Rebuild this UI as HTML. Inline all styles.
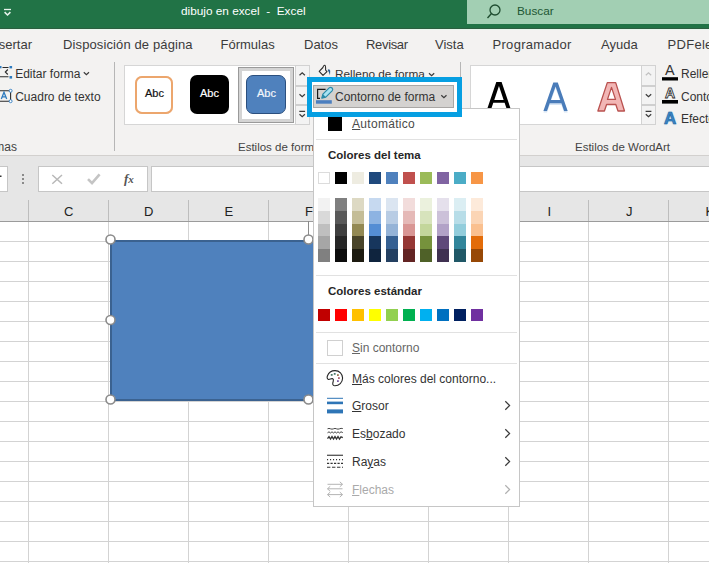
<!DOCTYPE html>
<html><head><meta charset="utf-8">
<style>
html,body{margin:0;padding:0}
body{width:709px;height:563px;overflow:hidden;position:relative;font-family:"Liberation Sans",sans-serif;background:#fff}
div,span{box-sizing:border-box}
.a{position:absolute}
.t{position:absolute;line-height:1;white-space:nowrap}
.m{letter-spacing:0.25px}
</style></head><body>

<!-- title bar -->
<div class="a" style="left:0;top:0;width:709px;height:28px;background:#217346"></div>
<div class="a" style="left:0;top:28px;width:709px;height:1px;background:#2c5e40"></div>
<div class="a" style="left:467px;top:0;width:242px;height:24px;background:#a2cfb3"></div>
<svg class="a" style="left:0;top:0" width="709" height="28">
  <path d="M4 9.5H11" stroke="#e8f3ec" stroke-width="1.3" fill="none"/>
  <path d="M4.6 12.2L7.5 15L10.4 12.2" stroke="#e8f3ec" stroke-width="1.6" fill="none"/>
  <circle cx="495" cy="10" r="5" stroke="#1f4d30" stroke-width="1.3" fill="none"/>
  <path d="M491.5 13.5L487.5 18" stroke="#1f4d30" stroke-width="1.4" fill="none"/>
</svg>
<div class="t" style="left:181px;top:5.5px;font-size:11.8px;color:#fff">dibujo en excel&nbsp; -&nbsp; Excel</div>
<div class="t" style="left:517px;top:6px;font-size:11.8px;color:#1d5733">Buscar</div>

<!-- tabs row -->
<div class="a" style="left:0;top:29px;width:709px;height:127px;background:#f3f2f1"></div>
<div class="a" style="left:0;top:29px;width:709px;height:1px;background:#e9f7ee"></div>
<div class="t" style="right:677px;top:38px;font-size:13px;color:#3b3b3b">Insertar</div>
<div class="t" style="left:63px;top:38px;font-size:13px;color:#3b3b3b;letter-spacing:0.12px">Disposición de página</div>
<div class="t" style="left:220.5px;top:38px;font-size:13px;color:#3b3b3b">Fórmulas</div>
<div class="t" style="left:304px;top:38px;font-size:13px;color:#3b3b3b">Datos</div>
<div class="t" style="left:366px;top:38px;font-size:13px;color:#3b3b3b;letter-spacing:-0.33px">Revisar</div>
<div class="t" style="left:435px;top:38px;font-size:13px;color:#3b3b3b">Vista</div>
<div class="t" style="left:492.5px;top:38px;font-size:13px;color:#3b3b3b;letter-spacing:0.3px">Programador</div>
<div class="t" style="left:601px;top:38px;font-size:13px;color:#3b3b3b">Ayuda</div>
<div class="t" style="left:667.5px;top:38px;font-size:13px;color:#3b3b3b;letter-spacing:0.3px">PDFelement</div>

<!-- ribbon -->
<div class="a" style="left:0;top:155px;width:709px;height:1px;background:#d2d0ce"></div>
<div class="a" style="left:114px;top:62px;width:1px;height:89px;background:#b6b6b6"></div>
<div class="a" style="left:460px;top:62px;width:1px;height:89px;background:#b6b6b6"></div>

<div class="t" style="left:15.2px;top:68px;font-size:12px;color:#333">Editar forma</div>
<div class="t" style="left:15.2px;top:91px;font-size:12px;color:#333">Cuadro de texto</div>
<div class="t" style="right:692px;top:141px;font-size:12px;color:#444">Formas</div>

<!-- shape styles gallery -->
<div class="a" style="left:124px;top:65px;width:185px;height:60px;background:#fff;border:1px solid #d6d6d6"></div>
<div class="a" style="left:135px;top:76px;width:38px;height:38px;border:2px solid #eca66d;border-radius:7px;background:#fff;box-shadow:0 0 0.5px #f5c9a5"></div>
<div class="a" style="left:190px;top:75px;width:39px;height:39px;border-radius:7px;background:#000"></div>
<div class="a" style="left:238px;top:67px;width:56px;height:56px;border:1px solid #9a9a9a;box-shadow:inset 0 0 0 3px #d4d4d4;background:#fff"></div>
<div class="a" style="left:246px;top:75px;width:40px;height:39px;border-radius:7px;background:#4f81bd;border:1.6px solid #2b4f7e"></div>
<div class="t" style="left:145px;top:88px;font-size:11px;color:#111;-webkit-text-stroke:0.2px #111">Abc</div>
<div class="t" style="left:200px;top:88px;font-size:11px;color:#fff;-webkit-text-stroke:0.2px #fff">Abc</div>
<div class="t" style="left:257px;top:88px;font-size:11px;color:#f4f7fb;-webkit-text-stroke:0.2px #f4f7fb">Abc</div>
<div class="a" style="left:295px;top:65px;width:15px;height:60px;border:1px solid #d2d2d2;background:#f3f3f3"></div>
<div class="a" style="left:295px;top:85px;width:15px;height:2px;background:#cfcfcf"></div>
<div class="a" style="left:295px;top:104px;width:15px;height:2px;background:#cfcfcf"></div>
<div class="t" style="left:238px;top:142px;font-size:11.5px;color:#444">Estilos de forma</div>

<!-- relleno -->
<div class="t" style="left:335px;top:69px;font-size:11.8px;color:#333">Relleno de forma</div>

<!-- wordart gallery -->
<div class="a" style="left:470px;top:65px;width:172px;height:60px;background:#fff;border:1px solid #d6d6d6"></div>
<div class="a" style="left:641px;top:65px;width:15px;height:60px;border:1px solid #d2d2d2;background:#f3f3f3"></div>
<div class="a" style="left:641px;top:85px;width:15px;height:2px;background:#cfcfcf"></div>
<div class="a" style="left:641px;top:104px;width:15px;height:2px;background:#cfcfcf"></div>
<svg class="a" style="left:0;top:0" width="709" height="130">
 <path fill-rule="evenodd" fill="#000" d="M496.3 82.1H501.6L511.4 111H507.4L504.6 102.7H493.3L490.5 111H486.5ZM498.95 86.1L503.65 99.9H494.25Z"/>
 <path fill-rule="evenodd" fill="#bcd3ec" opacity="0.6" transform="translate(0 1.6)" d="M553.3 82.5H557.8L567.7 111H564.1L561.4 103.3H549.7L547 111H543.4ZM555.55 86.4L560.3 100H550.8Z"/>
 <path fill-rule="evenodd" fill="#4a7cb9" d="M553.3 82.5H557.8L567.7 111H564.1L561.4 103.3H549.7L547 111H543.4ZM555.55 86.4L560.3 100H550.8Z"/>
 <path fill-rule="evenodd" fill="#f2b6b5" stroke="#b9514f" stroke-width="1.3" stroke-linejoin="round" d="M607.3 82.6H615.7L624.5 111H618L615.8 104.5H606.6L604.4 111H597.9ZM611.5 87.4L615.5 99.4H607.5Z"/>
</svg>
<div class="t" style="left:575px;top:142px;font-size:11.5px;color:#444">Estilos de WordArt</div>
<div class="t" style="left:681px;top:68px;font-size:12px;color:#333">Relleno de texto</div>
<div class="t" style="left:681px;top:91px;font-size:12px;color:#333">Contorno de texto</div>
<div class="t" style="left:681px;top:113px;font-size:12px;color:#333">Efectos de texto</div>

<!-- ribbon icons -->
<svg class="a" style="left:0;top:0" width="709" height="160">
 <!-- editar forma icon -->
 <g fill="#2e7bbf">
  <rect x="-0.5" y="66" width="2" height="2.3"/>
  <rect x="9.5" y="66" width="2.6" height="2.4"/>
  <rect x="9.5" y="76" width="2.6" height="2.6"/>
 </g>
 <path d="M2.5 67.5H8.5M0 76.8H8.5M7.8 69.5L5.3 72L7.8 74.5" stroke="#2b2b2b" stroke-width="1.1" fill="none"/>
 <!-- text box icon -->
 <path d="M-1 90.8H10.6V101.2H-1" stroke="#2b2b2b" stroke-width="1.1" fill="none"/>
 <path d="M1.3 99L4 92.3L6.7 99M2.3 96.8H5.7" stroke="#2e7bbf" stroke-width="1.3" fill="none"/>
 <circle cx="10.6" cy="90.8" r="1.5" fill="#fff" stroke="#2e7bbf" stroke-width="0.9"/>
 <circle cx="10.6" cy="101.2" r="1.5" fill="#fff" stroke="#2e7bbf" stroke-width="0.9"/>
 <!-- chevrons -->
 <g stroke="#3a3a3a" stroke-width="1.2" fill="none">
  <path d="M83.8 72.3L86.4 74.7L89 72.3"/>
  <path d="M429 73.3L431.6 75.7L434.2 73.3"/>
 </g>
 <!-- gallery scroll arrows -->
 <g stroke="#3a3a3a" stroke-width="1.2" fill="none">
  <path d="M299.5 75.3L302.2 72.8L304.9 75.3"/>
  <path d="M299.5 94.3L302.2 96.8L304.9 94.3"/>
  <path d="M299.3 111.3H305.1M299.5 114.2L302.2 116.7L304.9 114.2"/>
  <path d="M645.8 94.3L648.5 96.8L651.2 94.3"/>
  <path d="M645.6 111.3H651.4M645.8 114.2L648.5 116.7L651.2 114.2"/>
 </g>
 <path d="M645.8 75.3L648.5 72.8L651.2 75.3" stroke="#c0c0c0" stroke-width="1.2" fill="none"/>
 <!-- bucket -->
 <path d="M322.9 67.5L319.2 71.4L323 75.4L327 71.6L325.6 70.2M322.9 67.5Q323.6 65 324.8 65.3Q325.8 65.7 325.6 70.3" stroke="#2b2b2b" stroke-width="1.1" fill="none" stroke-linejoin="round"/>
 <path d="M327.6 70Q329.4 68.2 330.2 70.8L330 75.3Q329.3 72.2 327.6 70Z" fill="#2a5d8e"/>
 <rect x="662" y="77.2" width="16" height="3.3" fill="#000"/>
 <rect x="662" y="100" width="16" height="3.6" fill="#000"/>
</svg>
<div class="t" style="left:665px;top:63px;font-size:14.4px;color:#333">A</div>
<div class="t" style="left:665px;top:86px;font-size:14px;font-weight:bold;color:#fff;-webkit-text-stroke:0.9px #333">A</div>
<div class="t" style="left:664px;top:110px;font-size:17px;font-weight:bold;color:#3b86c6;-webkit-text-stroke:0.6px #1f5f98;text-shadow:0 0 2px #9ccff0,0 0 1px #9ccff0">A</div>
<!-- formula bar -->
<div class="a" style="left:0;top:156px;width:709px;height:65px;background:#e6e6e6"></div>
<div class="a" style="left:-10px;top:166px;width:18px;height:26px;background:#fff;border:1px solid #c6c6c6"></div>
<div class="a" style="left:38px;top:166px;width:110px;height:26px;background:#fff;border:1px solid #c6c6c6"></div>
<div class="a" style="left:151px;top:166px;width:570px;height:26px;background:#fff;border:1px solid #c6c6c6"></div>

<svg class="a" style="left:0;top:150px" width="709" height="50">
 <rect x="0" y="25.5" width="1.5" height="1.5" fill="#333"/>
 <g fill="#8a8a8a"><rect x="22" y="24" width="2" height="2"/><rect x="22" y="28" width="2" height="2"/><rect x="22" y="32" width="2" height="2"/></g>
 <path d="M52.3 25L62 33.8M62 25L52.3 33.8" stroke="#b8b8b8" stroke-width="1.5" fill="none"/>
 <path d="M88 29.2L92 33.2L99.6 24.4" stroke="#c4c4c4" stroke-width="2.6" fill="none"/>
</svg>
<div class="t" style="left:124px;top:172px;font-size:13px;font-family:'Liberation Serif',serif;font-style:italic;font-weight:bold;color:#555">f<span style="font-size:11px">x</span></div>
<!-- column headers -->
<div class="a" style="left:0;top:221px;width:709px;height:1px;background:#9b9b9b"></div>
<div class="t" style="left:64px;top:205px;font-size:13px;color:#222">C</div>
<div class="t" style="left:144px;top:205px;font-size:13px;color:#222">D</div>
<div class="t" style="left:224.5px;top:205px;font-size:13px;color:#222">E</div>
<div class="t" style="left:305px;top:205px;font-size:13px;color:#222">F</div>
<div class="t" style="left:547.5px;top:205px;font-size:13px;color:#222">I</div>
<div class="t" style="left:626px;top:205px;font-size:13px;color:#222">J</div>
<div class="t" style="left:705.5px;top:205px;font-size:13px;color:#222">K</div>

<!-- grid -->
<div class="a" style="left:0;top:222px;width:709px;height:341px;background-image:repeating-linear-gradient(to bottom,transparent 0,transparent 19px,#d3d3d3 19px,#d3d3d3 20px),repeating-linear-gradient(to right,transparent 0,transparent 28px,#d3d3d3 28px,#d3d3d3 29px,transparent 29px,transparent 80px)"></div>
<div class="a" style="left:28px;top:200px;width:1px;height:21px;background:#bdbdbd"></div><div class="a" style="left:108px;top:200px;width:1px;height:21px;background:#bdbdbd"></div><div class="a" style="left:188px;top:200px;width:1px;height:21px;background:#bdbdbd"></div><div class="a" style="left:268px;top:200px;width:1px;height:21px;background:#bdbdbd"></div><div class="a" style="left:348px;top:200px;width:1px;height:21px;background:#bdbdbd"></div><div class="a" style="left:428px;top:200px;width:1px;height:21px;background:#bdbdbd"></div><div class="a" style="left:508px;top:200px;width:1px;height:21px;background:#bdbdbd"></div><div class="a" style="left:588px;top:200px;width:1px;height:21px;background:#bdbdbd"></div><div class="a" style="left:668px;top:200px;width:1px;height:21px;background:#bdbdbd"></div>

<!-- shape -->
<div class="a" style="left:110px;top:240px;width:203px;height:161px;background:#4f81bd;border-top:2px solid #3b6290;border-left:2px solid #3b6290;border-bottom:2px solid #3b6290"></div>
<div class="a" style="left:308px;top:221px;width:1px;height:14px;background:#8a8a8a"></div>
<svg class="a" style="left:0;top:0" width="709" height="563">
<g fill="#fff" stroke="#8a8a8a" stroke-width="1.6">
<circle cx="110.5" cy="239.5" r="4.5"/><circle cx="308.5" cy="239.5" r="4.5"/>
<circle cx="110.5" cy="320" r="4.5"/><circle cx="110.5" cy="399.5" r="4.5"/><circle cx="308.5" cy="399.5" r="4.5"/>
</g></svg>

<!-- dropdown -->
<div class="a" style="left:313px;top:108px;width:207px;height:399px;background:#fff;border:1px solid #c6c6c6"></div>
<div class="a" style="left:328px;top:117px;width:14px;height:14px;background:#000"></div>
<div class="t" style="left:352px;top:118px;font-size:12px;color:#4a4a4a;letter-spacing:0.3px"><u>A</u>utomático</div>
<div class="a" style="left:316px;top:139px;width:201px;height:1px;background:#e1e1e1"></div>
<div class="t" style="left:328px;top:150px;font-size:11.5px;font-weight:bold;color:#262626">Colores del tema</div>

<div class="a" style="left:318px;top:172px;width:12px;height:12px;background:#FFFFFF;border:1px solid #dcdcdc;"></div>
<div class="a" style="left:335px;top:172px;width:12px;height:12px;background:#000000;"></div>
<div class="a" style="left:352px;top:172px;width:12px;height:12px;background:#EEECE1;"></div>
<div class="a" style="left:369px;top:172px;width:12px;height:12px;background:#1F497D;"></div>
<div class="a" style="left:386px;top:172px;width:12px;height:12px;background:#4F81BD;"></div>
<div class="a" style="left:403px;top:172px;width:12px;height:12px;background:#C0504D;"></div>
<div class="a" style="left:420px;top:172px;width:12px;height:12px;background:#9BBB59;"></div>
<div class="a" style="left:437px;top:172px;width:12px;height:12px;background:#8064A2;"></div>
<div class="a" style="left:454px;top:172px;width:12px;height:12px;background:#4BACC6;"></div>
<div class="a" style="left:471px;top:172px;width:12px;height:12px;background:#F79646;"></div>
<div class="a" style="left:318px;top:198px;width:12px;height:13px;background:#F2F2F2"></div>
<div class="a" style="left:318px;top:211px;width:12px;height:13px;background:#D9D9D9"></div>
<div class="a" style="left:318px;top:224px;width:12px;height:12px;background:#BFBFBF"></div>
<div class="a" style="left:318px;top:236px;width:12px;height:13px;background:#A6A6A6"></div>
<div class="a" style="left:318px;top:249px;width:12px;height:13px;background:#808080"></div>
<div class="a" style="left:335px;top:198px;width:12px;height:13px;background:#7F7F7F"></div>
<div class="a" style="left:335px;top:211px;width:12px;height:13px;background:#595959"></div>
<div class="a" style="left:335px;top:224px;width:12px;height:12px;background:#3F3F3F"></div>
<div class="a" style="left:335px;top:236px;width:12px;height:13px;background:#262626"></div>
<div class="a" style="left:335px;top:249px;width:12px;height:13px;background:#0C0C0C"></div>
<div class="a" style="left:352px;top:198px;width:12px;height:13px;background:#DDD9C3"></div>
<div class="a" style="left:352px;top:211px;width:12px;height:13px;background:#C4BD97"></div>
<div class="a" style="left:352px;top:224px;width:12px;height:12px;background:#938953"></div>
<div class="a" style="left:352px;top:236px;width:12px;height:13px;background:#494429"></div>
<div class="a" style="left:352px;top:249px;width:12px;height:13px;background:#1D1B10"></div>
<div class="a" style="left:369px;top:198px;width:12px;height:13px;background:#C6D9F0"></div>
<div class="a" style="left:369px;top:211px;width:12px;height:13px;background:#8DB3E2"></div>
<div class="a" style="left:369px;top:224px;width:12px;height:12px;background:#548DD4"></div>
<div class="a" style="left:369px;top:236px;width:12px;height:13px;background:#17365D"></div>
<div class="a" style="left:369px;top:249px;width:12px;height:13px;background:#0F243E"></div>
<div class="a" style="left:386px;top:198px;width:12px;height:13px;background:#DBE5F1"></div>
<div class="a" style="left:386px;top:211px;width:12px;height:13px;background:#B8CCE4"></div>
<div class="a" style="left:386px;top:224px;width:12px;height:12px;background:#95B3D7"></div>
<div class="a" style="left:386px;top:236px;width:12px;height:13px;background:#366092"></div>
<div class="a" style="left:386px;top:249px;width:12px;height:13px;background:#244061"></div>
<div class="a" style="left:403px;top:198px;width:12px;height:13px;background:#F2DCDB"></div>
<div class="a" style="left:403px;top:211px;width:12px;height:13px;background:#E5B9B7"></div>
<div class="a" style="left:403px;top:224px;width:12px;height:12px;background:#D99694"></div>
<div class="a" style="left:403px;top:236px;width:12px;height:13px;background:#953734"></div>
<div class="a" style="left:403px;top:249px;width:12px;height:13px;background:#632423"></div>
<div class="a" style="left:420px;top:198px;width:12px;height:13px;background:#EBF1DD"></div>
<div class="a" style="left:420px;top:211px;width:12px;height:13px;background:#D7E3BC"></div>
<div class="a" style="left:420px;top:224px;width:12px;height:12px;background:#C3D69B"></div>
<div class="a" style="left:420px;top:236px;width:12px;height:13px;background:#76923C"></div>
<div class="a" style="left:420px;top:249px;width:12px;height:13px;background:#4F6128"></div>
<div class="a" style="left:437px;top:198px;width:12px;height:13px;background:#E5E0EC"></div>
<div class="a" style="left:437px;top:211px;width:12px;height:13px;background:#CCC1D9"></div>
<div class="a" style="left:437px;top:224px;width:12px;height:12px;background:#B2A2C7"></div>
<div class="a" style="left:437px;top:236px;width:12px;height:13px;background:#5F497A"></div>
<div class="a" style="left:437px;top:249px;width:12px;height:13px;background:#3F3151"></div>
<div class="a" style="left:454px;top:198px;width:12px;height:13px;background:#DBEEF3"></div>
<div class="a" style="left:454px;top:211px;width:12px;height:13px;background:#B7DDE8"></div>
<div class="a" style="left:454px;top:224px;width:12px;height:12px;background:#92CDDC"></div>
<div class="a" style="left:454px;top:236px;width:12px;height:13px;background:#31859B"></div>
<div class="a" style="left:454px;top:249px;width:12px;height:13px;background:#205867"></div>
<div class="a" style="left:471px;top:198px;width:12px;height:13px;background:#FDEADA"></div>
<div class="a" style="left:471px;top:211px;width:12px;height:13px;background:#FBD5B5"></div>
<div class="a" style="left:471px;top:224px;width:12px;height:12px;background:#FAC08F"></div>
<div class="a" style="left:471px;top:236px;width:12px;height:13px;background:#E36C09"></div>
<div class="a" style="left:471px;top:249px;width:12px;height:13px;background:#974806"></div>

<div class="a" style="left:316px;top:275px;width:201px;height:1px;background:#e1e1e1"></div>
<div class="t" style="left:328px;top:286px;font-size:11.5px;font-weight:bold;color:#262626">Colores estándar</div>

<div class="a" style="left:318px;top:309px;width:12px;height:12px;background:#C00000"></div>
<div class="a" style="left:335px;top:309px;width:12px;height:12px;background:#FF0000"></div>
<div class="a" style="left:352px;top:309px;width:12px;height:12px;background:#FFC000"></div>
<div class="a" style="left:369px;top:309px;width:12px;height:12px;background:#FFFF00"></div>
<div class="a" style="left:386px;top:309px;width:12px;height:12px;background:#92D050"></div>
<div class="a" style="left:403px;top:309px;width:12px;height:12px;background:#00B050"></div>
<div class="a" style="left:420px;top:309px;width:12px;height:12px;background:#00B0F0"></div>
<div class="a" style="left:437px;top:309px;width:12px;height:12px;background:#0070C0"></div>
<div class="a" style="left:454px;top:309px;width:12px;height:12px;background:#002060"></div>
<div class="a" style="left:471px;top:309px;width:12px;height:12px;background:#7030A0"></div>

<div class="a" style="left:316px;top:332px;width:201px;height:1px;background:#e1e1e1"></div>
<div class="a" style="left:327px;top:340px;width:16px;height:16px;border:1px solid #d0d0d0"></div>
<div class="t" style="left:352px;top:342px;font-size:12px;color:#666"><u>S</u>in contorno</div>
<div class="a" style="left:316px;top:363px;width:201px;height:1px;background:#e1e1e1"></div>
<div class="t" style="left:352px;top:373px;font-size:12px;color:#333"><u>M</u>ás colores del contorno...</div>
<div class="t" style="left:352px;top:400px;font-size:12px;color:#333"><u>G</u>rosor</div>
<div class="t" style="left:352px;top:428px;font-size:12px;color:#333">Es<u>b</u>ozado</div>
<div class="t" style="left:352px;top:456px;font-size:12px;color:#333">Ra<u>y</u>as</div>
<div class="t" style="left:352px;top:484px;font-size:12px;color:#aaa"><u>F</u>lechas</div>

<svg class="a" style="left:0;top:0" width="709" height="563">
 <!-- palette -->
 <path d="M335 370.6C339.5 370.6 342.6 374 342.6 378C342.6 382.5 339 385.8 335 385.8C333.2 385.8 332.5 384.6 332.8 383C333.2 381.2 334.2 379.6 332.8 378.8C331.4 378 329.8 379.8 328.4 379.4C327.2 379 326.8 377.6 327.4 376C328.6 372.6 331.6 370.6 335 370.6Z" fill="#fff" stroke="#262626" stroke-width="1.1"/>
 <rect x="330.8" y="374" width="1.8" height="1.8" fill="#4a7a6a"/>
 <rect x="333.8" y="373" width="1.8" height="1.8" fill="#4a7a6a"/>
 <rect x="337" y="374.2" width="1.8" height="1.8" fill="#9a7a50"/>
 <rect x="338" y="377.2" width="1.8" height="1.8" fill="#b06070"/>
 <rect x="337" y="380.2" width="1.8" height="1.8" fill="#7a5aa0"/>
 <!-- grosor -->
 <rect x="327" y="397.8" width="16" height="1" fill="#2e75b6"/>
 <rect x="327" y="401.6" width="16" height="2.6" fill="#2e75b6"/>
 <rect x="327" y="409.4" width="16" height="4" fill="#2e75b6"/>
 <!-- esbozado -->
 <g stroke="#333" fill="none">
  <path d="M327.5 428.8Q329 428 330.5 428.8T333.5 428.8T336.5 428.8T339.5 428.8T342.8 428.6" stroke-width="0.9"/>
  <path d="M327.5 432.8L329 431.8L330.5 433L332 431.8L333.5 433L335 431.8L336.5 433L338 431.8L339.5 433L341 431.8L342.8 432.6" stroke-width="0.9"/>
  <path d="M327.5 438.6L329 436.6L330.5 439L332 436.6L333.5 439L335 436.6L336.5 439L338 436.6L339.5 439L341 436.8L342.8 437.6" stroke-width="1.3"/>
 </g>
 <!-- rayas -->
 <rect x="327" y="454.7" width="16" height="1.1" fill="#333"/>
 <path d="M327 459.6H343" stroke="#333" stroke-width="1.1" stroke-dasharray="1.1 1.9"/>
 <path d="M327 463.4H343" stroke="#333" stroke-width="1.1" stroke-dasharray="2.2 1.3"/>
 <path d="M327 467.3H343" stroke="#333" stroke-width="1.1" stroke-dasharray="3.4 1.6"/>
 <!-- flechas -->
 <g stroke="#b4b4b4" stroke-width="1" fill="none">
  <path d="M327.5 484.3H342.5M339.8 481.8L342.5 484.3L339.8 486.8"/>
  <path d="M327.5 488.8H342.5M330.2 486.3L327.5 488.8L330.2 491.3"/>
  <path d="M327.5 494.6H342.5M330.2 492.1L327.5 494.6L330.2 497.1M339.8 492.1L342.5 494.6L339.8 497.1"/>
 </g>
 <!-- submenu arrows -->
 <g stroke="#3a3a3a" stroke-width="1.2" fill="none">
  <path d="M505.3 401.3L509.6 405.5L505.3 409.7"/>
  <path d="M505.3 429.3L509.6 433.5L505.3 437.7"/>
  <path d="M505.3 457.3L509.6 461.5L505.3 465.7"/>
 </g>
 <path d="M505.3 485.3L509.6 489.5L505.3 493.7" stroke="#b0b0b0" stroke-width="1.2" fill="none"/>
</svg>
<!-- highlight -->
<div class="a" style="left:307px;top:77px;width:155px;height:40px;border:5px solid #069fe2;background:#fff"></div>
<div class="a" style="left:313px;top:85px;width:141px;height:23px;background:#d4d2d0;border:1px solid #a9a7a5"></div>
<div class="t" style="left:335px;top:90.5px;font-size:12px;color:#333">Contorno de forma</div>
<svg class="a" style="left:0;top:0" width="709" height="130">
 <path d="M320 98.3H317.6V89.3H325.6" stroke="#1a1a1a" stroke-width="1.2" fill="none"/>
 <path d="M321.8 98.2L322.9 94.2L329.2 87.9Q330.7 86.6 332.1 88Q333.4 89.4 332.1 90.9L325.8 97.1Z" fill="#a9e3f3" stroke="#2b8aa8" stroke-width="1.2" stroke-linejoin="round"/>
 <path d="M321.8 98.2L322.9 94.2L325.8 97.1Z" fill="#2b8aa8"/>
 <rect x="316" y="100.2" width="15.8" height="3.5" fill="#4c7fbf"/>
</svg>
<svg class="a" style="left:0;top:0" width="709" height="130"><path d="M441.3 95.3L443.9 97.7L446.5 95.3" stroke="#3a3a3a" stroke-width="1.2" fill="none"/></svg>


</body></html>
